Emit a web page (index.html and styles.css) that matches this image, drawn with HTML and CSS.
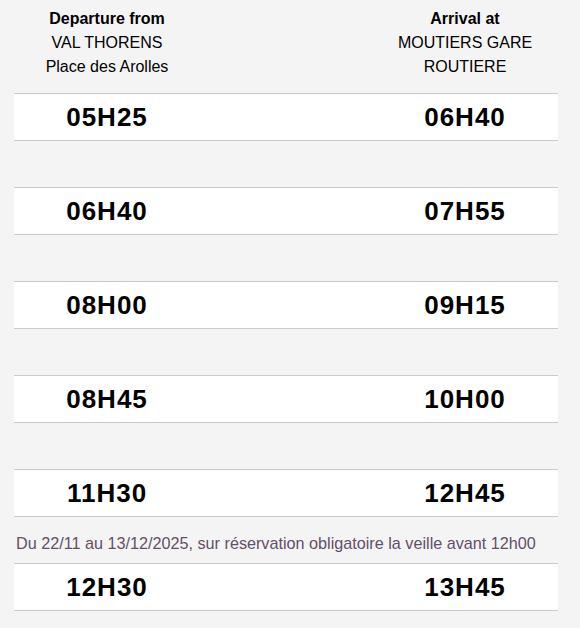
FILE: index.html
```html
<!DOCTYPE html>
<html>
<head>
<meta charset="utf-8">
<link rel="stylesheet" href="styles.css">
</head>
<body>
<div class="page">
  <div class="head">
    <div class="col"><strong>Departure from</strong><br>VAL THORENS<br>Place des Arolles</div>
    <div></div>
    <div class="col"><strong>Arrival at</strong><br>MOUTIERS GARE<br>ROUTIERE</div>
  </div>
  <div class="board">
    <div class="row"><span>05H25</span><span></span><span>06H40</span></div>
    <div class="gap"></div>
    <div class="row"><span>06H40</span><span></span><span>07H55</span></div>
    <div class="gap"></div>
    <div class="row"><span>08H00</span><span></span><span>09H15</span></div>
    <div class="gap"></div>
    <div class="row"><span>08H45</span><span></span><span>10H00</span></div>
    <div class="gap"></div>
    <div class="row"><span>11H30</span><span></span><span>12H45</span></div>
    <div class="note">Du 22/11 au 13/12/2025, sur réservation obligatoire la veille avant 12h00</div>
    <div class="row"><span>12H30</span><span></span><span>13H45</span></div>
  </div>
</div>
</body>
</html>
```
FILE: styles.css
```css
html, body {
  margin: 0;
  padding: 0;
  background: #f4f4f4;
}
body {
  font-family: "Liberation Sans", Arial, Helvetica, sans-serif;
  color: #000;
}
.page {
  width: 544px;
  margin-left: 14px;
  padding-top: 7px;
}
.head {
  display: grid;
  grid-template-columns: 186px 1fr 186px;
  font-size: 16px;
  line-height: 24px;
  text-align: center;
  margin-bottom: 14px;
}
.board {
  display: flex;
  flex-direction: column;
}
.row {
  display: grid;
  grid-template-columns: 186px 1fr 186px;
  align-items: center;
  height: 46px;
  background: #fff;
  border-top: 1px solid #cccccc;
  border-bottom: 1px solid #cccccc;
  text-align: center;
  font-weight: bold;
  font-size: 26px;
  letter-spacing: 1px;
}
.gap {
  height: 46px;
}
.note {
  height: 46px;
  display: flex;
  align-items: center;
  padding-top: 6px;
  box-sizing: border-box;
  padding-left: 2px;
  font-size: 16.2px;
  color: #634f69;
  white-space: nowrap;
}
```
